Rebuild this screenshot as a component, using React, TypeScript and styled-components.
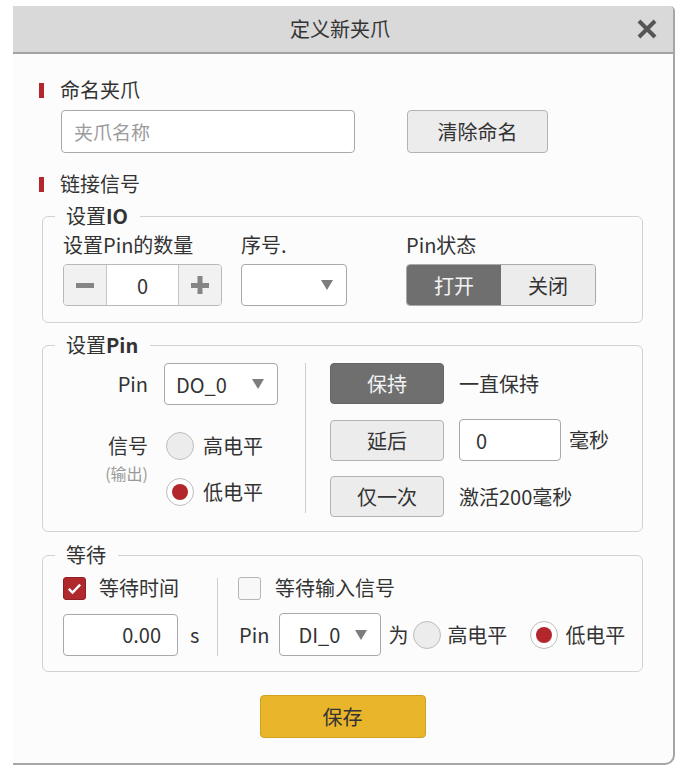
import styled, { createGlobalStyle } from 'styled-components'

const GlobalStyle = createGlobalStyle`
  html, body {
    margin: 0;
    background: #fff;
  }
  body {
    font-family: "Noto Sans CJK SC", "Noto Sans", sans-serif;
    font-size: 20px;
    color: #333;
  }
  * {
    box-sizing: border-box;
  }
`

const Page = styled.div`
  padding: 6px 0 10px 13px;
`

const Dialog = styled.div`
  width: 662px;
  background: #fcfcfc;
  border-right: 2px solid #a6a6a6;
  border-bottom: 2px solid #a6a6a6;
  border-radius: 0 5px 10px 0;
  overflow: hidden;
`

const Header = styled.div`
  height: 48px;
  display: grid;
  grid-template-columns: 1fr auto 1fr;
  align-items: center;
  background: #d9d9d9;
  border-bottom: 2px solid #a3a3a3;
  padding: 0 16px 0 10px;
`

const Title = styled.div`
  grid-column: 2;
  line-height: 26px;
  color: #333;
`

const CloseBtn = styled.div`
  justify-self: end;
  display: flex;
  svg {
    display: block;
  }
`

const Body = styled.div`
  display: flex;
  flex-direction: column;
  padding: 23px 30px 25px 29px;
`

const SectionTitle = styled.div<{ $mt?: number }>`
  display: flex;
  align-items: center;
  gap: 16px;
  margin: ${p => p.$mt ?? 0}px 0 0 -3px;
  line-height: 26px;
  &::before {
    content: '';
    width: 5px;
    height: 15px;
    background: #b3262b;
  }
`

const NameRow = styled.div`
  display: flex;
  gap: 52px;
  margin: 7px 0 0 19px;
`

const NameInput = styled.input`
  width: 294px;
  height: 43px;
  border: 1px solid #a9a9a9;
  border-radius: 4px;
  padding: 0 12px;
  font: inherit;
  font-size: 19px;
  background: #fff;
  color: #333;
  outline: none;
  &::placeholder {
    color: #9b9b9b;
  }
`

const Button = styled.button<{ $dark?: boolean; $w: number; $h: number }>`
  width: ${p => p.$w}px;
  height: ${p => p.$h}px;
  padding: 0;
  border: 1px solid ${p => (p.$dark ? '#666' : '#b3b3b3')};
  border-radius: 4px;
  background: ${p => (p.$dark ? '#6f6f6f' : '#ececec')};
  color: ${p => (p.$dark ? '#f3f3f3' : '#333')};
  font: inherit;
  font-size: 20px;
`

const Group = styled.div<{ $mt: number; $pad: string }>`
  position: relative;
  margin-top: ${p => p.$mt}px;
  padding: ${p => p.$pad};
  border: 1px solid #d2d2d2;
  border-radius: 6px;
`

const Legend = styled.div`
  position: absolute;
  top: -14px;
  left: 12px;
  padding: 0 12px 0 11px;
  background: #fcfcfc;
  line-height: 26px;
  b {
    font-weight: 700;
  }
`

const IOGrid = styled.div`
  display: grid;
  grid-template-columns: 178px 165px 1fr;
`

const Field = styled.div`
  display: flex;
  flex-direction: column;
  gap: 6px;
`

const FieldLabel = styled.div`
  line-height: 26px;
`

const Stepper = styled.div`
  display: flex;
  width: 159px;
  height: 42px;
  border: 1px solid #b8b8b8;
  border-radius: 4px;
  overflow: hidden;
`

const StepBtn = styled.div`
  width: 42px;
  display: flex;
  align-items: center;
  justify-content: center;
  background: #f1f1f1;
`

const StepValue = styled.div`
  flex: 1;
  display: flex;
  align-items: center;
  justify-content: center;
  background: #fff;
  border-left: 1px solid #c6c6c6;
  border-right: 1px solid #c6c6c6;
`

const Select = styled.div<{ $w: number; $h: number; $pl: number; $ml?: number }>`
  display: flex;
  flex: none;
  align-items: center;
  justify-content: space-between;
  width: ${p => p.$w}px;
  height: ${p => p.$h}px;
  margin-left: ${p => p.$ml ?? 0}px;
  padding: 0 13px 0 ${p => p.$pl}px;
  border: 1px solid #a9a9a9;
  border-radius: 4px;
  background: #fff;
`

const Toggle = styled.div`
  display: flex;
  width: 190px;
  height: 42px;
  border: 1px solid #a9a9a9;
  border-radius: 4px;
  overflow: hidden;
`

const ToggleOpt = styled.div<{ $on?: boolean }>`
  flex: 1;
  display: flex;
  align-items: center;
  justify-content: center;
  background: ${p => (p.$on ? '#6f6f6f' : '#ececec')};
  color: ${p => (p.$on ? '#f4f4f4' : '#333')};
`

const PinBody = styled.div`
  display: flex;
  align-items: flex-start;
`

const LeftPane = styled.div`
  width: 242px;
  display: grid;
  grid-template-columns: 85px auto;
  grid-template-rows: 42px auto;
  column-gap: 16px;
  row-gap: 27px;
`

const SideLabel = styled.div<{ $lh: number }>`
  text-align: right;
  line-height: ${p => p.$lh}px;
`

const SubNote = styled.div`
  margin-top: 4px;
  text-align: right;
  font-size: 16px;
  line-height: 18px;
  color: #9a9a9a;
`

const RadioStack = styled.div`
  display: flex;
  flex-direction: column;
  gap: 18px;
  margin-left: 2px;
`

const RadioRow = styled.div<{ $gap: number; $ml?: number }>`
  display: flex;
  flex: none;
  align-items: center;
  gap: ${p => p.$gap}px;
  margin-left: ${p => p.$ml ?? 0}px;
  line-height: 28px;
  white-space: nowrap;
`

const Radio = styled.div<{ $checked?: boolean }>`
  width: 28px;
  height: 28px;
  flex: none;
  display: flex;
  align-items: center;
  justify-content: center;
  border: 1px solid #bdbdbd;
  border-radius: 50%;
  background: ${p => (p.$checked ? '#fff' : '#ececec')};
  &::after {
    content: '';
    display: ${p => (p.$checked ? 'block' : 'none')};
    width: 16px;
    height: 16px;
    border-radius: 50%;
    background: #b3262b;
  }
`

const VDivider = styled.div<{ $h: number; $mt: number }>`
  width: 1px;
  height: ${p => p.$h}px;
  margin-top: ${p => p.$mt}px;
  background: #cfcfcf;
  flex: none;
`

const RightPane = styled.div`
  display: flex;
  flex-direction: column;
  gap: 15px;
  margin-left: 24px;
`

const ActionRow = styled.div`
  display: flex;
  align-items: center;
  gap: 15px;
`

const ValueInput = styled.input<{ $w: number; $align: 'left' | 'right' }>`
  width: ${p => p.$w}px;
  height: 42px;
  padding: 0 16px;
  border: 1px solid #a9a9a9;
  border-radius: 4px;
  background: #fff;
  font: inherit;
  font-size: 20px;
  color: #333;
  text-align: ${p => p.$align};
  outline: none;
`

const Text = styled.span<{ $ml?: number }>`
  flex: none;
  margin-left: ${p => p.$ml ?? 0}px;
  line-height: 26px;
  white-space: nowrap;
`

const WaitBody = styled.div`
  display: flex;
  align-items: flex-start;
`

const WaitCol = styled.div<{ $w?: number; $ml?: number }>`
  display: flex;
  flex: none;
  flex-direction: column;
  gap: 12px;
  ${p => (p.$w ? `width: ${p.$w}px;` : '')}
  margin-left: ${p => p.$ml ?? 0}px;
`

const CheckRow = styled.div<{ $gap: number }>`
  display: flex;
  align-items: center;
  gap: ${p => p.$gap}px;
  height: 26px;
`

const Checkbox = styled.div<{ $checked?: boolean }>`
  width: 23px;
  height: 23px;
  display: flex;
  align-items: center;
  justify-content: center;
  border: 1px solid ${p => (p.$checked ? '#8f1f23' : '#b5b5b5')};
  border-radius: 3px;
  background: ${p => (p.$checked ? '#b0282c' : '#f8f8f8')};
`

const InputRow = styled.div`
  display: flex;
  align-items: center;
  height: 43px;
`

const SaveButton = styled.button`
  align-self: center;
  width: 166px;
  height: 43px;
  margin-top: 23px;
  border: 1px solid #d2a021;
  border-radius: 4px;
  background: #e9b62b;
  color: #333;
  font: inherit;
  font-size: 20px;
`

const Arrow = () => (
  <svg width='12' height='10' viewBox='0 0 12 10'>
    <polygon points='0,0 12,0 6,10' fill='#7d7d7d' />
  </svg>
)

const Minus = () => (
  <svg width='18' height='18' viewBox='0 0 18 18'>
    <rect x='0' y='7' width='18' height='5' fill='#858585' />
  </svg>
)

const Plus = () => (
  <svg width='18' height='18' viewBox='0 0 18 18'>
    <rect x='0' y='7' width='18' height='5' fill='#858585' />
    <rect x='6.5' y='0' width='5' height='18' fill='#858585' />
  </svg>
)

const Check = () => (
  <svg width='17' height='17' viewBox='0 0 24 24'>
    <path d='M4 12.5l5.2 5.2L20 6.5' fill='none' stroke='#fff' strokeWidth='3.4' />
  </svg>
)

export default function App () {
  return (
    <>
      <GlobalStyle />
      <Page>
        <Dialog>
          <Header>
            <Title>定义新夹爪</Title>
            <CloseBtn>
              <svg width='20' height='20' viewBox='0 0 20 20'>
                <path d='M2 2L18 18M18 2L2 18' stroke='#555' strokeWidth='4' />
              </svg>
            </CloseBtn>
          </Header>

          <Body>
            <SectionTitle>命名夹爪</SectionTitle>
            <NameRow>
              <NameInput placeholder='夹爪名称' />
              <Button $w={141} $h={43}>清除命名</Button>
            </NameRow>

            <SectionTitle $mt={18}>链接信号</SectionTitle>

            {/* IO */}
            <Group $mt={19} $pad='15px 20px 16px'>
              <Legend>设置<b>IO</b></Legend>
              <IOGrid>
                <Field>
                  <FieldLabel>设置Pin的数量</FieldLabel>
                  <Stepper>
                    <StepBtn><Minus /></StepBtn>
                    <StepValue>0</StepValue>
                    <StepBtn><Plus /></StepBtn>
                  </Stepper>
                </Field>
                <Field>
                  <FieldLabel>序号.</FieldLabel>
                  <Select $w={106} $h={42} $pl={12}>
                    <span />
                    <Arrow />
                  </Select>
                </Field>
                <Field>
                  <FieldLabel>Pin状态</FieldLabel>
                  <Toggle>
                    <ToggleOpt $on>打开</ToggleOpt>
                    <ToggleOpt>关闭</ToggleOpt>
                  </Toggle>
                </Field>
              </IOGrid>
            </Group>

            {/* Pin */}
            <Group $mt={22} $pad='17px 20px 14px'>
              <Legend>设置<b>Pin</b></Legend>
              <PinBody>
                <LeftPane>
                  <SideLabel $lh={42}>Pin</SideLabel>
                  <Select $w={114} $h={42} $pl={11}>
                    <span>DO_0</span>
                    <Arrow />
                  </Select>
                  <div>
                    <SideLabel $lh={28}>信号</SideLabel>
                    <SubNote>(输出)</SubNote>
                  </div>
                  <RadioStack>
                    <RadioRow $gap={9}>
                      <Radio />
                      高电平
                    </RadioRow>
                    <RadioRow $gap={9}>
                      <Radio $checked />
                      低电平
                    </RadioRow>
                  </RadioStack>
                </LeftPane>
                <VDivider $h={150} $mt={0} />
                <RightPane>
                  <ActionRow>
                    <Button $dark $w={114} $h={41}>保持</Button>
                    <Text>一直保持</Text>
                  </ActionRow>
                  <ActionRow>
                    <Button $w={114} $h={41}>延后</Button>
                    <ValueInput $w={102} $align='left' value='0' readOnly />
                    <Text $ml={-7}>毫秒</Text>
                  </ActionRow>
                  <ActionRow>
                    <Button $w={114} $h={41}>仅一次</Button>
                    <Text>激活200毫秒</Text>
                  </ActionRow>
                </RightPane>
              </PinBody>
            </Group>

            {/* Wait */}
            <Group $mt={23} $pad='19px 20px 15px'>
              <Legend>等待</Legend>
              <WaitBody>
                <WaitCol $w={154}>
                  <CheckRow $gap={13}>
                    <Checkbox $checked><Check /></Checkbox>
                    <Text>等待时间</Text>
                  </CheckRow>
                  <InputRow>
                    <ValueInput $w={115} $align='right' value='0.00' readOnly />
                    <Text $ml={12}>s</Text>
                  </InputRow>
                </WaitCol>
                <VDivider $h={78} $mt={3} />
                <WaitCol $ml={20}>
                  <CheckRow $gap={14}>
                    <Checkbox />
                    <Text>等待输入信号</Text>
                  </CheckRow>
                  <InputRow>
                    <Text $ml={1}>Pin</Text>
                    <Select $w={102} $h={43} $pl={18} $ml={10}>
                      <span>DI_0</span>
                      <Arrow />
                    </Select>
                    <Text $ml={7}>为</Text>
                    <RadioRow $gap={6} $ml={5}>
                      <Radio />
                      高电平
                    </RadioRow>
                    <RadioRow $gap={7} $ml={23}>
                      <Radio $checked />
                      低电平
                    </RadioRow>
                  </InputRow>
                </WaitCol>
              </WaitBody>
            </Group>

            <SaveButton>保存</SaveButton>
          </Body>
        </Dialog>
      </Page>
    </>
  )
}
